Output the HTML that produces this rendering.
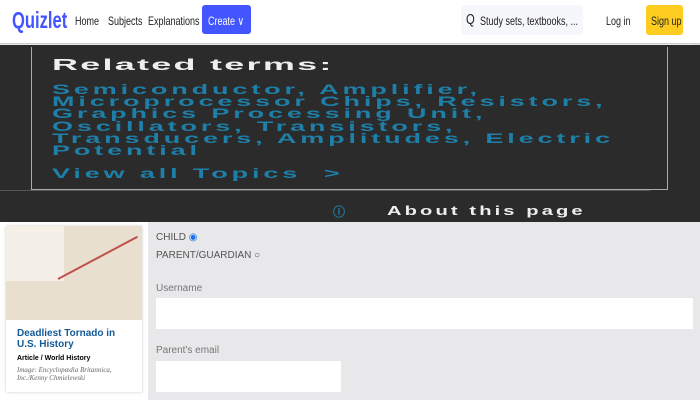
<!DOCTYPE html>
<html><head><style>
*{margin:0;padding:0;box-sizing:border-box}
body{width:700px;height:400px;overflow:hidden;background:#e8e8ea;font-family:"Liberation Sans",sans-serif;position:relative}
.hdr{position:absolute;left:0;top:0;width:700px;height:44px;background:#fff;border-bottom:1px solid #ccc}
.hdr span{position:absolute;font-size:12px;color:#222;transform:scaleX(.75);transform-origin:left;white-space:nowrap}
.dark{position:absolute;left:0;top:45px;width:700px;height:177px;background:#2b2b2b}
.box{position:absolute;left:31px;top:2px;width:637px;height:143px;border:1px solid #aaa;border-top:none}
.t{position:absolute;left:52px;white-space:nowrap;font-weight:bold;transform-origin:left top}
.blue{color:#1e7fa8;font-size:14px;letter-spacing:2px;transform:scaleX(1.93);line-height:14px}
</style></head><body>
<div class="hdr">
<div style="position:absolute;left:12px;top:7px;font-size:23px;font-weight:bold;color:#4255ff;transform:scaleX(.72);transform-origin:left">Quizlet</div>
<span style="left:75px;top:14px">Home</span>
<span style="left:108px;top:14px">Subjects</span>
<span style="left:148px;top:14px">Explanations</span>
<div style="position:absolute;left:202px;top:5px;width:49px;height:29px;background:#4255ff;border-radius:3px"></div>
<span style="left:208px;top:14px;color:#fff">Create ∨</span>
<div style="position:absolute;left:461px;top:5px;width:122px;height:30px;background:#f6f7fb;border-radius:4px"></div>
<span style="left:466px;top:11px;font-size:15px">Q</span>
<span style="left:480px;top:14px">Study sets, textbooks, ...</span>
<span style="left:606px;top:14px">Log in</span>
<div style="position:absolute;left:646px;top:5px;width:37px;height:30px;background:#ffcd1f;border-radius:3px"></div>
<span style="left:651px;top:14px">Sign up</span>
<div style="position:absolute;left:693px;top:44px;width:7px;height:178px;background:#ddd"></div>
</div>
<div class="dark">
<div class="box"></div>
<div style="position:absolute;left:0;top:145px;width:650px;height:1px;background:#555"></div>
<div class="t" style="top:12px;color:#eee;font-size:16px;letter-spacing:1px;transform:scaleX(2.25)">Related terms:</div>
<div class="t blue" style="top:37px">Semiconductor, Amplifier,</div>
<div class="t blue" style="top:49px">Microprocessor Chips, Resistors,</div>
<div class="t blue" style="top:61px">Graphics Processing Unit,</div>
<div class="t blue" style="top:74px">Oscillators, Transistors,</div>
<div class="t blue" style="top:86px">Transducers, Amplitudes, Electric</div>
<div class="t blue" style="top:98px">Potential</div>
<div class="t blue" style="top:121px">View all Topics &nbsp;&gt;</div>
<div class="t" style="left:333px;top:158px;color:#1e7fa8;font-size:12px">ⓘ</div>
<div class="t" style="left:387px;top:158px;color:#eee;font-size:13px;letter-spacing:2px;transform:scaleX(1.55)">About this page</div>
</div>
<div style="position:absolute;left:0;top:222px;width:148px;height:178px;background:#fff"></div>
<div style="position:absolute;left:6px;top:226px;width:136px;height:166px;background:#fff;box-shadow:0 0 3px #ccc">
<div style="height:94px;background:#e8dfcf;position:relative;overflow:hidden">
<div style="position:absolute;left:0;top:0;width:58px;height:55px;background:#f4f0e8"></div>
<div style="position:absolute;left:52px;top:52px;width:90px;height:2px;background:#c05050;transform:rotate(-28deg);transform-origin:left"></div>
</div>
<div style="padding:8px 11px;font-size:10px">
<div style="color:#135a96;font-weight:bold;font-size:10px;line-height:11px">Deadliest Tornado in<br>U.S. History</div>
<div style="font-weight:bold;font-size:7px;margin-top:5px">Article / World History</div>
<div style="font-family:'Liberation Serif',serif;font-style:italic;font-size:7px;color:#666;margin-top:4px">Image: Encyclopædia Britannica,<br>Inc./Kenny Chmielewski</div>
</div></div>
<div style="position:absolute;left:156px;top:232px;font-size:10px;color:#555">CHILD <span style="color:#1a73e8">◉</span></div>
<div style="position:absolute;left:156px;top:250px;font-size:10px;color:#555">PARENT/GUARDIAN ○</div>
<div style="position:absolute;left:156px;top:283px;font-size:10px;color:#777">Username</div>
<div style="position:absolute;left:156px;top:298px;width:537px;height:31px;background:#fff"></div>
<div style="position:absolute;left:156px;top:345px;font-size:10px;color:#777">Parent's email</div>
<div style="position:absolute;left:156px;top:361px;width:185px;height:31px;background:#fff"></div>
</body></html>
